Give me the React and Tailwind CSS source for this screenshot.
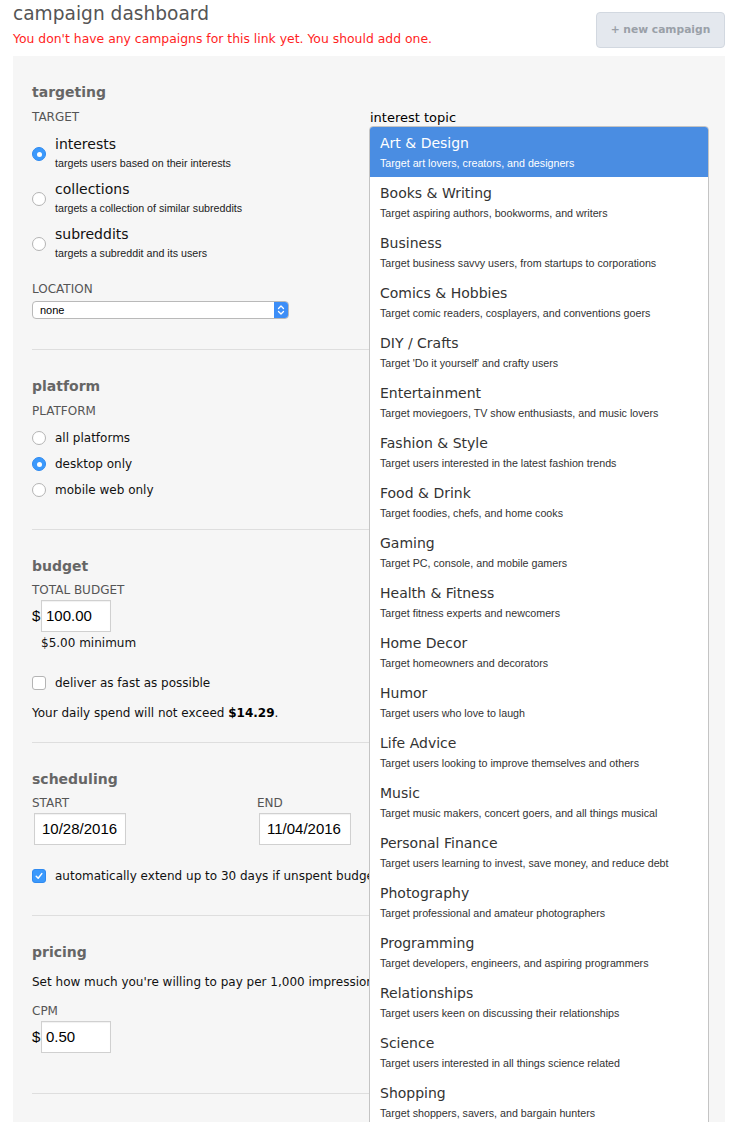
import React from "react";

const topics = [
  ["Art & Design", "Target art lovers, creators, and designers"],
  ["Books & Writing", "Target aspiring authors, bookworms, and writers"],
  ["Business", "Target business savvy users, from startups to corporations"],
  ["Comics & Hobbies", "Target comic readers, cosplayers, and conventions goers"],
  ["DIY / Crafts", "Target 'Do it yourself' and crafty users"],
  ["Entertainment", "Target moviegoers, TV show enthusiasts, and music lovers"],
  ["Fashion & Style", "Target users interested in the latest fashion trends"],
  ["Food & Drink", "Target foodies, chefs, and home cooks"],
  ["Gaming", "Target PC, console, and mobile gamers"],
  ["Health & Fitness", "Target fitness experts and newcomers"],
  ["Home Decor", "Target homeowners and decorators"],
  ["Humor", "Target users who love to laugh"],
  ["Life Advice", "Target users looking to improve themselves and others"],
  ["Music", "Target music makers, concert goers, and all things musical"],
  ["Personal Finance", "Target users learning to invest, save money, and reduce debt"],
  ["Photography", "Target professional and amateur photographers"],
  ["Programming", "Target developers, engineers, and aspiring programmers"],
  ["Relationships", "Target users keen on discussing their relationships"],
  ["Science", "Target users interested in all things science related"],
  ["Shopping", "Target shoppers, savers, and bargain hunters"],
];

const SANS = "font-['DejaVu_Sans',sans-serif]";
const ARIAL = "font-['Liberation_Sans',Arial,sans-serif]";

function Radio({ checked }) {
  if (checked) {
    return (
      <div className="w-[14px] h-[14px] rounded-full bg-[#3b99fc] border border-[#2f8af0] flex items-center justify-center shrink-0">
        <div className="w-[5px] h-[5px] rounded-full bg-white" />
      </div>
    );
  }
  return <div className="w-[14px] h-[14px] rounded-full bg-white border border-[#b4b4b4] shrink-0" />;
}

function Checkbox({ checked }) {
  if (checked) {
    return (
      <div className="w-[14px] h-[14px] rounded-[3px] bg-[#3b99fc] border border-[#2f8af0] flex items-center justify-center shrink-0">
        <svg width="10" height="10" viewBox="0 0 10 10">
          <path d="M2.2 5.2 L4.2 7.2 L7.8 2.6" fill="none" stroke="white" strokeWidth="1.5" strokeLinecap="round" strokeLinejoin="round" />
        </svg>
      </div>
    );
  }
  return <div className="w-[14px] h-[14px] rounded-[3px] bg-white border border-[#b4b4b4] shrink-0" />;
}

function Heading({ children }) {
  return <div className="text-[14px] leading-[20px] font-bold text-[#666]">{children}</div>;
}

function SubLabel({ children, className = "" }) {
  return <div className={"text-[12px] leading-[16px] text-[#555] uppercase " + className}>{children}</div>;
}

function TextInput({ value, className = "" }) {
  return (
    <div className={"h-[32px] bg-white border border-[#d0d0d0] shadow-[inset_0_1px_1px_rgba(0,0,0,0.06)] flex items-center text-[15px] text-black " + ARIAL + " " + className}>
      {value}
    </div>
  );
}

export default function App() {
  return (
    <div className={"bg-white min-h-[1122px] px-[13px] text-[#222] " + SANS}>
      {/* Header */}
      <div className="flex justify-between items-start">
        <div>
          <div className="text-[18.6px] leading-[28px] text-[#555]">campaign dashboard</div>
          <div className="text-[12.4px] leading-[16px] text-[#ff1e1e] mt-[3px]">
            You don't have any campaigns for this link yet. You should add one.
          </div>
        </div>
        <div className="mt-[12px] w-[129px] h-[36px] rounded-[4px] bg-[#e4e8ee] border border-[#d2d8e0] flex items-center justify-center text-[10.7px] font-bold text-[#9aa0a8]">
          + new campaign
        </div>
      </div>

      {/* Panel */}
      <div className="mt-[8px] bg-[#f6f6f6] px-[19px] pt-[26px] relative">
        {/* targeting */}
        <div className="flex border-b border-[#dedede] pb-[30px]">
          <div className="w-[337px] shrink-0">
            <Heading>targeting</Heading>
            <SubLabel className="mt-[7px]">Target</SubLabel>
            <div className="mt-[10px] flex flex-col gap-[10px]">
              {[
                ["interests", "targets users based on their interests", true],
                ["collections", "targets a collection of similar subreddits", false],
                ["subreddits", "targets a subreddit and its users", false],
              ].map(([t, d, c]) => (
                <div key={t} className="flex items-start">
                  <div className="mt-[12px]">
                    <Radio checked={c} />
                  </div>
                  <div className="ml-[9px]">
                    <div className="text-[14px] leading-[18px] text-[#111]">{t}</div>
                    <div className={"text-[10.7px] leading-[14px] mt-[3px] text-[#222] " + ARIAL}>{d}</div>
                  </div>
                </div>
              ))}
            </div>
            <SubLabel className="mt-[21px]">Location</SubLabel>
            <div className="mt-[4px] w-[257px] h-[18px] bg-white border border-[#b9b9b9] rounded-[4px] flex items-center justify-between overflow-hidden">
              <span className={"pl-[7px] text-[11px] text-black " + ARIAL}>none</span>
              <div className="w-[14px] h-full bg-[#3d8ef7] flex items-center justify-center">
                <svg width="8" height="12" viewBox="0 0 8 12">
                  <path d="M1.5 4.5 L4 2 L6.5 4.5 M1.5 7.5 L4 10 L6.5 7.5" fill="none" stroke="white" strokeWidth="1.3" strokeLinecap="round" strokeLinejoin="round" />
                </svg>
              </div>
            </div>
          </div>
          <div className="flex-1 pt-[28px] pl-[1px] relative z-10">
            <div className="text-[13px] leading-[16px] text-black">interest topic</div>
            <div className="relative">
              <div className="absolute left-[-1px] top-0 w-[340px] bg-white border border-[#c4c4c4] rounded-t-[4px] overflow-hidden">
                {topics.map(([t, d], i) => (
                  <div
                    key={t}
                    className={
                      "h-[50px] pl-[10px] pt-[7px] " +
                      (i === 0 ? "bg-[#4a8de2] text-white" : "text-[#333]")
                    }
                  >
                    <div className="text-[14px] leading-[18px]">{t}</div>
                    <div className={"text-[10.7px] leading-[14px] mt-[4px] " + ARIAL}>{d}</div>
                  </div>
                ))}
              </div>
            </div>
          </div>
        </div>

        {/* platform */}
        <div className="pt-[26px] pb-[26px] border-b border-[#dedede]">
          <Heading>platform</Heading>
          <SubLabel className="mt-[7px]">Platform</SubLabel>
          <div className="mt-[6px]">
            {[
              ["all platforms", false],
              ["desktop only", true],
              ["mobile web only", false],
            ].map(([t, c]) => (
              <div key={t} className="h-[26px] flex items-center">
                <Radio checked={c} />
                <span className="ml-[9px] text-[12px] text-[#111]">{t}</span>
              </div>
            ))}
          </div>
        </div>

        {/* budget */}
        <div className="pt-[26px] pb-[19px] border-b border-[#dedede]">
          <Heading>budget</Heading>
          <SubLabel className="mt-[6px]">Total budget</SubLabel>
          <div className="mt-[2px] flex items-center">
            <span className={"text-[15px] text-black w-[9px] " + ARIAL}>$</span>
            <TextInput value="100.00" className="w-[70px] pl-[4px] h-[31px]" />
          </div>
          <div className="mt-[3px] pl-[9px] text-[12px] leading-[16px] text-[#111]">$5.00 minimum</div>
          <div className="mt-[22px] h-[20px] flex items-center">
            <Checkbox checked={false} />
            <span className="ml-[9px] text-[12px] text-[#111]">deliver as fast as possible</span>
          </div>
          <div className="mt-[10px] text-[12px] leading-[20px] text-[#111]">
            Your daily spend will not exceed <b className="text-black">$14.29</b>.
          </div>
        </div>

        {/* scheduling */}
        <div className="pt-[26px] pb-[29px] border-b border-[#dedede]">
          <Heading>scheduling</Heading>
          <div className="mt-[6px] flex">
            <div className="w-[225px]">
              <SubLabel>Start</SubLabel>
              <TextInput value="10/28/2016" className="mt-[2px] ml-[2px] w-[92px] pl-[7px]" />
            </div>
            <div>
              <SubLabel>End</SubLabel>
              <TextInput value="11/04/2016" className="mt-[2px] ml-[2px] w-[92px] pl-[7px]" />
            </div>
          </div>
          <div className="mt-[21px] h-[20px] flex items-center whitespace-nowrap">
            <Checkbox checked={true} />
            <span className="ml-[9px] text-[12px] text-[#111]">
              automatically extend up to 30 days if unspent budget remains
            </span>
          </div>
        </div>

        {/* pricing */}
        <div className="pt-[26px] pb-[40px] border-b border-[#dedede]">
          <Heading>pricing</Heading>
          <div className="mt-[10px] text-[12px] leading-[20px] text-[#111] whitespace-nowrap">
            Set how much you're willing to pay per 1,000 impressions.
          </div>
          <SubLabel className="mt-[11px]">CPM</SubLabel>
          <div className="mt-[2px] flex items-center">
            <span className={"text-[15px] text-black w-[9px] " + ARIAL}>$</span>
            <TextInput value="0.50" className="w-[70px] pl-[4px] h-[31px]" />
          </div>
        </div>
        <div className="h-[40px]" />
      </div>
    </div>
  );
}
